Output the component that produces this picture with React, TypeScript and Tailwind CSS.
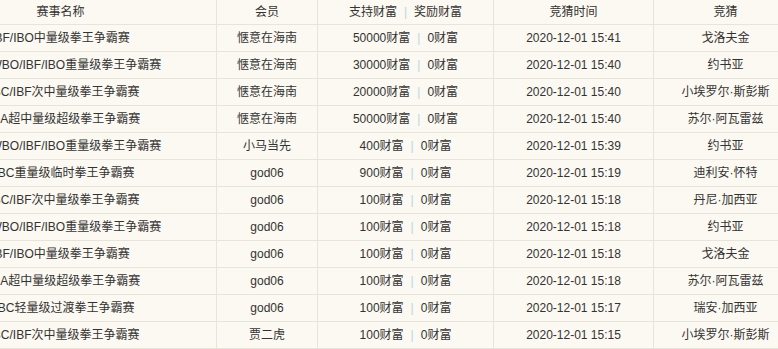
import React from "react";

interface BetRow {
  match: string;
  member: string;
  support: string;
  reward: string;
  time: string;
  pick: string;
}

const rows: BetRow[] = [
  { match: "IBF/IBO中量级拳王争霸赛", member: "惬意在海南", support: "50000", reward: "0", time: "2020-12-01 15:41", pick: "戈洛夫金" },
  { match: "WBA/WBO/IBF/IBO重量级拳王争霸赛", member: "惬意在海南", support: "30000", reward: "0", time: "2020-12-01 15:40", pick: "约书亚" },
  { match: "WBC/IBF次中量级拳王争霸赛", member: "惬意在海南", support: "20000", reward: "0", time: "2020-12-01 15:40", pick: "小埃罗尔·斯彭斯" },
  { match: "WBA超中量级超级拳王争霸赛", member: "惬意在海南", support: "50000", reward: "0", time: "2020-12-01 15:40", pick: "苏尔·阿瓦雷兹" },
  { match: "WBA/WBO/IBF/IBO重量级拳王争霸赛", member: "小马当先", support: "400", reward: "0", time: "2020-12-01 15:39", pick: "约书亚" },
  { match: "WBC重量级临时拳王争霸赛", member: "god06", support: "900", reward: "0", time: "2020-12-01 15:19", pick: "迪利安·怀特" },
  { match: "WBC/IBF次中量级拳王争霸赛", member: "god06", support: "100", reward: "0", time: "2020-12-01 15:18", pick: "丹尼·加西亚" },
  { match: "WBA/WBO/IBF/IBO重量级拳王争霸赛", member: "god06", support: "100", reward: "0", time: "2020-12-01 15:18", pick: "约书亚" },
  { match: "IBF/IBO中量级拳王争霸赛", member: "god06", support: "100", reward: "0", time: "2020-12-01 15:18", pick: "戈洛夫金" },
  { match: "WBA超中量级超级拳王争霸赛", member: "god06", support: "100", reward: "0", time: "2020-12-01 15:18", pick: "苏尔·阿瓦雷兹" },
  { match: "WBC轻量级过渡拳王争霸赛", member: "god06", support: "100", reward: "0", time: "2020-12-01 15:17", pick: "瑞安·加西亚" },
  { match: "WBC/IBF次中量级拳王争霸赛", member: "贾二虎", support: "100", reward: "0", time: "2020-12-01 15:15", pick: "小埃罗尔·斯彭斯" },
];

const cell = "flex items-center justify-center whitespace-nowrap border-r border-[#e7e4da]";

function Sep() {
  return <span className="mx-[7px] text-[#b8d7e4]">|</span>;
}

export default function App(): React.JSX.Element {
  return (
    <div
      className="w-[778px] h-[349px] overflow-hidden bg-[#fbf9f1] text-[12px] text-[#333]"
      style={{ fontFamily: '"Liberation Sans", "Noto Sans CJK SC", sans-serif' }}
    >
      {/* table is scrolled sideways, so first and last columns are clipped */}
      <div className="ml-[-95px] w-[892px]">
        <div className="flex h-[25px] border-b border-[#e7e4da]">
          <div className={`${cell} w-[312px]`}>赛事名称</div>
          <div className={`${cell} w-[101px]`}>会员</div>
          <div className={`${cell} w-[176px]`}>
            支持财富
            <Sep />
            奖励财富
          </div>
          <div className={`${cell} w-[160px]`}>竞猜时间</div>
          <div className={`${cell} w-[143px] border-r-0`}>竞猜</div>
        </div>
        {rows.map((r, i) => (
          <div key={i} className="flex h-[27px] border-b border-[#e7e4da]">
            <div className={`${cell} w-[312px]`}>{r.match}</div>
            <div className={`${cell} w-[101px]`}>{r.member}</div>
            <div className={`${cell} w-[176px]`}>
              {r.support}财富
              <Sep />
              {r.reward}财富
            </div>
            <div className={`${cell} w-[160px]`}>{r.time}</div>
            <div className={`${cell} w-[143px] border-r-0`}>{r.pick}</div>
          </div>
        ))}
      </div>
    </div>
  );
}
